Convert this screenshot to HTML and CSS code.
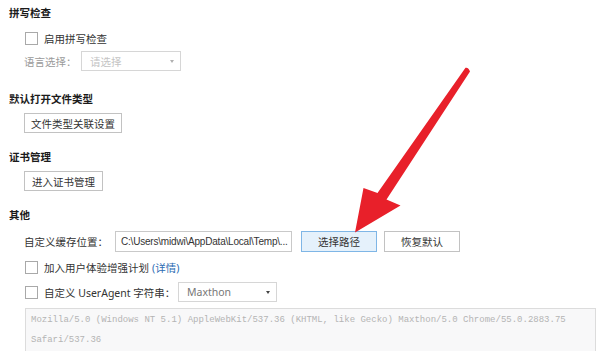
FILE: index.html
```html
<!DOCTYPE html>
<html>
<head>
  <title>设置</title>
  <link rel="stylesheet" href="styles.css">
</head>
<body>
  <div class="settings">
    <h3 class="title first">拼写检查</h3>
    <label class="check-row row-spell"><span class="box"></span>启用拼写检查</label>
    <div class="line row-lang">
      <span class="muted">语言选择：</span>
      <div class="select select-lang disabled"><span>请选择</span><i class="caret"></i></div>
    </div>

    <h3 class="title">默认打开文件类型</h3>
    <button class="btn btn-assoc">文件类型关联设置</button>

    <h3 class="title after-btn">证书管理</h3>
    <button class="btn btn-cert">进入证书管理</button>

    <h3 class="title after-btn">其他</h3>
    <div class="line row-cache">
      <span class="label">自定义缓存位置：</span>
      <div class="field">C:\Users\midwi\AppData\Local\Temp\...</div>
      <button class="btn btn-pick">选择路径</button>
      <button class="btn btn-reset">恢复默认</button>
    </div>
    <label class="check-row row-join"><span class="box"></span>加入用户体验增强计划 <a class="link">(详情)</a></label>
    <div class="line row-ua">
      <label class="check-row ua-label"><span class="box"></span>自定义 UserAgent 字符串：</label>
      <div class="select select-ua"><span>Maxthon</span><i class="caret dark"></i></div>
    </div>
    <div class="ua-text">Mozilla/5.0 (Windows NT 5.1) AppleWebKit/537.36 (KHTML, like Gecko) Maxthon/5.0 Chrome/55.0.2883.75 Safari/537.36</div>
  </div>

  <svg class="pointer" width="600" height="351" viewBox="0 0 600 351">
    <path d="M465.5 67.8 Q468.5 67 470 71.6 L386.5 199.5 L400.5 205.5 L355 232.5 L363.5 188 L377.5 193 Z" fill="#e8202a"/>
  </svg>
</body>
</html>
```

FILE: styles.css
```css
body {
  margin: 0;
  background-color: #fff;
  color: #333;
  font-family: "Noto Sans", "Noto Sans CJK SC", sans-serif;
  font-size: 10.5px;
  position: relative;
  height: 351px;
  overflow: hidden;
}

.settings {
  display: flex;
  flex-direction: column;
  align-items: flex-start;
  padding-left: 9px;
}

.title {
  margin: 20px 0 0;
  height: 16px;
  line-height: 16px;
  font-size: 10.5px;
  font-weight: bold;
  color: #1b1b1b;
}

.title.first {
  margin-top: 5px;
}

.title.after-btn {
  margin-top: 16px;
}

.check-row {
  display: flex;
  align-items: center;
  height: 20px;
  margin-left: 16px;
}

.box {
  width: 11px;
  height: 11px;
  border: 1px solid #a9a9a9;
  background-color: #fff;
  margin-right: 6px;
}

.row-spell {
  margin-top: 7px;
}

.line {
  display: flex;
  align-items: center;
  margin-left: 15px;
}

.row-lang {
  margin-top: 3px;
}

.muted {
  color: #9a9a9a;
  width: 57px;
}

.select {
  box-sizing: border-box;
  height: 20px;
  border: 1px solid #d6d6d6;
  display: flex;
  align-items: center;
  justify-content: space-between;
  padding: 0 6px 0 8px;
  background-color: #fff;
}

.select-lang {
  width: 100px;
  color: #c4c4c4;
}

.caret {
  width: 0;
  height: 0;
  border-left: 2.5px solid transparent;
  border-right: 2.5px solid transparent;
  border-top: 3px solid #b0b0b0;
}

.caret.dark {
  border-top-color: #444;
}

.btn {
  box-sizing: border-box;
  height: 20px;
  padding: 0;
  border: 1px solid #c2c2c2;
  background-color: #fff;
  color: #333;
  font-family: inherit;
  font-size: 10.5px;
}

.btn-assoc {
  width: 98px;
  margin: 6px 0 0 15px;
}

.btn-cert {
  width: 79px;
  margin: 6px 0 0 15px;
}

.row-cache {
  margin-top: 8px;
}

.label {
  width: 91px;
}

.field {
  box-sizing: border-box;
  width: 177px;
  height: 21px;
  line-height: 19px;
  border: 1px solid #c9c9c9;
  padding-left: 5px;
  color: #333;
  font-family: "Liberation Sans", sans-serif;
  font-size: 10px;
  letter-spacing: -0.2px;
  white-space: nowrap;
  overflow: hidden;
}

.btn-pick {
  width: 76px;
  height: 21px;
  margin-left: 9px;
  background-color: #e5f1fb;
  border-color: #7fb6e6;
}

.btn-reset {
  width: 76px;
  height: 21px;
  margin-left: 7px;
}

.row-join {
  margin-top: 5px;
}

.link {
  color: #2b6cb3;
  margin-left: 3px;
}

.row-ua {
  margin-top: 5px;
  margin-left: 0;
}

.ua-label {
  width: 153px;
}

.select-ua {
  width: 99px;
  color: #777;
}

.ua-text {
  box-sizing: border-box;
  width: 571px;
  height: 43px;
  margin: 6px 0 0 16px;
  padding: 1px 5px 0;
  border: 1px solid #dcdcdc;
  border-bottom: none;
  background-color: #f8f8f9;
  color: #b4b4b4;
  font-family: "Liberation Mono", monospace;
  font-size: 9px;
  line-height: 20px;
}

.pointer {
  position: absolute;
  left: 0;
  top: 0;
}
```
